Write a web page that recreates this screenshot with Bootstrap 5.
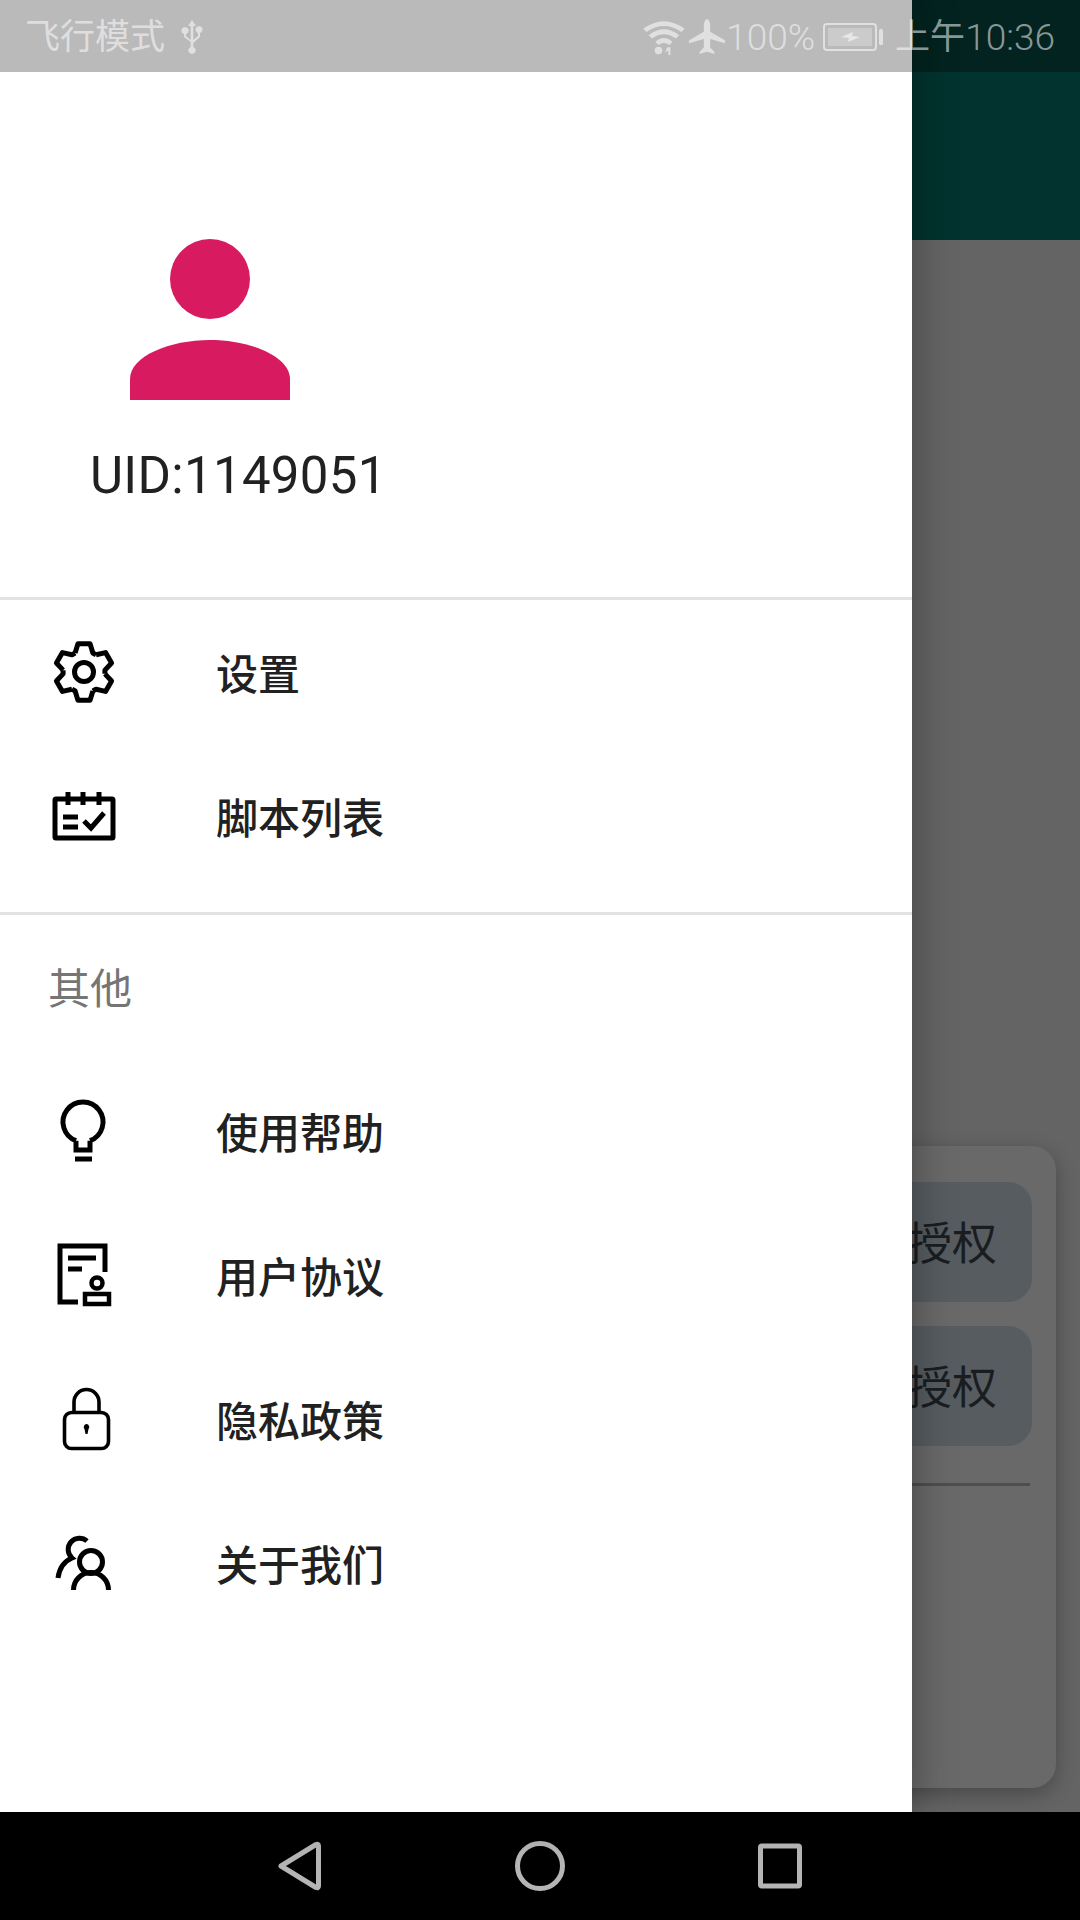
<!DOCTYPE html>
<html lang="zh-CN">

<head>
    <meta charset="UTF-8" />
    <meta name="viewport" content="width=device-width, initial-scale=1" />
    <title>Drawer</title>
    <link href="https://cdn.jsdelivr.net/npm/bootstrap@5.3.2/dist/css/bootstrap.min.css" rel="stylesheet" />
    <style>
        html,
        body {
            margin: 0;
            width: 1080px;
            height: 1920px;
            overflow: hidden;
            font-family: Roboto, "Noto Sans CJK SC", sans-serif;
        }

        .screen {
            width: 1080px;
            height: 1920px;
            background: #646464;
        }

        /* app behind the drawer */
        .app-status {
            height: 72px;
            background: #02231f;
        }

        .app-toolbar {
            height: 168px;
            background: #02332e;
        }

        .app-body {
            padding: 906px 24px 24px;
        }

        .auth-card {
            height: 642px;
            background: #696969;
            border: 0;
            border-radius: 24px;
            box-shadow: 0 6px 20px rgba(0, 0, 0, .28);
            padding: 36px 24px 0;
        }

        .auth-btn {
            height: 120px;
            background: #565c60;
            border: 0;
            border-radius: 24px;
            color: #1a1d20;
            font-size: 45px;
            line-height: 1;
            padding: 4px 35px 0 0;
        }

        .auth-line {
            height: 3px;
            background: #4e4e4e;
            margin: 37px 2px 0 0;
        }

        .bottom-nav {
            height: 108px;
            background: #000;
            gap: 180px;
        }

        /* drawer */
        .side-drawer {
            top: 0;
            left: 0;
            width: 912px;
            bottom: 108px;
            background: #fff;
            box-shadow: 0 0 40px rgba(0, 0, 0, .35);
        }

        .drawer-strip {
            height: 72px;
            background: #bababa;
        }

        .drawer-head {
            height: 525px;
            padding: 167px 0 0 90px;
        }

        .avatar-svg {
            display: block;
            width: 160px;
            height: 161px;
            margin-left: 40px;
            fill: #d81b60;
        }

        .uid-text {
            font-size: 51px;
            letter-spacing: .3px;
            line-height: 60px;
            color: #212121;
            margin-top: 46px;
        }

        .drawer-line {
            height: 3px;
            background: #e2e2e2;
        }

        .line-gap {
            margin-top: 24px;
        }

        .drawer-item {
            height: 144px;
            padding-left: 48px;
            gap: 96px;
            font-size: 42px;
            font-weight: 500;
            color: #212121;
        }

        .drawer-item span {
            padding-top: 6px;
        }

        .drawer-item svg {
            width: 72px;
            height: 72px;
            flex: none;
            fill: none;
            stroke: #000;
            stroke-width: 5;
        }

        .group-title {
            height: 144px;
            padding: 46px 0 0 48px;
            font-size: 42px;
            line-height: 58px;
            color: #757575;
        }

        /* status bar lies over both */
        .status-row {
            top: 0;
            left: 0;
            width: 1080px;
            height: 72px;
            padding: 2px 25px 0;
            color: rgba(255, 255, 255, .55);
        }

        .status-cn {
            font-size: 35px;
            line-height: 1;
        }

        .status-time {
            margin-left: 12px;
        }

        .status-num {
            font-size: 37px;
            font-weight: 300;
            line-height: 1;
        }

        .status-row svg {
            fill: rgba(255, 255, 255, .55);
            flex: none;
        }
    </style>
</head>

<body>
    <div class="screen position-relative d-flex flex-column">

        <!-- app behind -->
        <div class="flex-grow-1">
            <div class="app-status"></div>
            <div class="app-toolbar"></div>
            <div class="app-body">
                <div class="card auth-card">
                    <div class="d-flex flex-column gap-4">
                        <div class="auth-btn d-flex align-items-center justify-content-end">授权</div>
                        <div class="auth-btn d-flex align-items-center justify-content-end">授权</div>
                    </div>
                    <div class="auth-line"></div>
                </div>
            </div>
        </div>

        <!-- bottom nav -->
        <div class="bottom-nav d-flex justify-content-center align-items-center flex-shrink-0">
            <svg width="60" height="64" viewBox="0 0 60 64" fill="none" stroke="#b5b5b5" stroke-width="5" stroke-linejoin="round">
                <path d="M11 32 L46 10.5 Q48.5 9.5 48.5 12 V52 Q48.5 54.5 46 53.5 Z" />
            </svg>
            <svg width="60" height="64" viewBox="0 0 60 64" fill="none" stroke="#b5b5b5" stroke-width="5">
                <circle cx="30" cy="32" r="22.5" />
            </svg>
            <svg width="60" height="64" viewBox="0 0 60 64" fill="none" stroke="#b5b5b5" stroke-width="5" stroke-linejoin="round">
                <rect x="10.5" y="12" width="39" height="40" rx="1.5" />
            </svg>
        </div>

        <!-- drawer -->
        <div class="side-drawer position-absolute">
            <div class="drawer-strip"></div>
            <div class="drawer-head">
                <svg class="avatar-svg" viewBox="0 0 160 161">
                    <circle cx="80" cy="40" r="40" />
                    <path d="M0 161 V140 C0 117 40 101 80 101 C120 101 160 117 160 140 V161 Z" />
                </svg>
                <div class="uid-text">UID:1149051</div>
            </div>
            <div class="drawer-line"></div>

            <div class="drawer-item d-flex align-items-center">
                <svg viewBox="0 0 72 72" stroke-linejoin="round">
                    <g>
                        <path d="M27.13 16.97 L29.97 7.63 H42.03 L44.87 16.97 L48.05 18.8" />
                        <path d="M27.13 16.97 L29.97 7.63 H42.03 L44.87 16.97 L48.05 18.8" transform="rotate(60 36 36)" />
                        <path d="M27.13 16.97 L29.97 7.63 H42.03 L44.87 16.97 L48.05 18.8" transform="rotate(120 36 36)" />
                        <path d="M27.13 16.97 L29.97 7.63 H42.03 L44.87 16.97 L48.05 18.8" transform="rotate(180 36 36)" />
                        <path d="M27.13 16.97 L29.97 7.63 H42.03 L44.87 16.97 L48.05 18.8" transform="rotate(240 36 36)" />
                        <path d="M27.13 16.97 L29.97 7.63 H42.03 L44.87 16.97 L48.05 18.8" transform="rotate(300 36 36)" />
                    </g>
                    <circle cx="36" cy="36" r="9.5" />
                </svg>
                <span>设置</span>
            </div>
            <div class="drawer-item d-flex align-items-center">
                <svg viewBox="0 0 72 72">
                    <rect x="7" y="19" width="58" height="39" rx="1" />
                    <path d="M20 12 V25 M35 12 V25 M51 12 V25 M15 37 H30 M15 47 H30 M36 41 L43 48 L56 33" />
                </svg>
                <span>脚本列表</span>
            </div>
            <div class="drawer-line line-gap"></div>

            <div class="group-title">其他</div>

            <div class="drawer-item d-flex align-items-center">
                <svg viewBox="0 0 72 72">
                    <path d="M42 45.7 V55 H28 V45.7 M42 45.7 A20 20 0 1 0 28 45.7 M27 64 H44" />
                </svg>
                <span>使用帮助</span>
            </div>
            <div class="drawer-item d-flex align-items-center">
                <svg viewBox="0 0 72 72">
                    <path d="M30 63 H12 V7 H57 V33 M20 19 H48 M20 30 H34" />
                    <circle cx="49" cy="44" r="5.5" stroke-width="4.500" />
                    <rect x="37" y="55" width="24" height="10" stroke-width="4.500" />
                </svg>
                <span>用户协议</span>
            </div>
            <div class="drawer-item d-flex align-items-center">
                <svg viewBox="0 0 72 72">
                    <rect x="16.5" y="29.5" width="44" height="36" rx="7" stroke-width="3.6" />
                    <path d="M26 29 V19 A12.5 12.5 0 0 1 51 19 V29" stroke-width="3.6" />
                    <path d="M38.5 41 a3 3 0 0 1 2 5 l-1 5 h-2 l-1 -5 a3 3 0 0 1 2 -5 z" fill="#000" stroke="none" />
                </svg>
                <span>隐私政策</span>
            </div>
            <div class="drawer-item d-flex align-items-center">
                <svg viewBox="0 0 72 72">
                    <circle cx="43" cy="35" r="11.5" />
                    <path d="M25.500 63 A17.500 17.500 0 0 1 60.500 63" />
                    <path d="M39 14 A10.5 10.5 0 1 0 24 31 Q12 36 10 51" />
                </svg>
                <span>关于我们</span>
            </div>
        </div>

        <!-- status bar -->
        <div class="status-row position-absolute d-flex align-items-center justify-content-between">
            <div class="d-flex align-items-center gap-3">
                <span class="status-cn">飞行模式</span>
                <svg width="22" height="34" viewBox="0 0 22 34">
                    <path d="M11 0 L15 6 H12.3 V20 L17 16 V13 A3.5 3.5 0 1 1 19 13 V17 L12.3 23 V27 A3.6 3.6 0 1 1 9.7 27 V22 L3 17 V14 A3.6 3.6 0 1 1 5 14 V16 L9.7 20 V6 H7 Z" />
                </svg>
            </div>
            <div class="d-flex align-items-center">
                <svg width="46" height="37" viewBox="0 0 42 34">
                    <path d="M1 9 Q20 -5 39 9 L36 12 Q20 1 4 12 Z M6 15 Q20 4 34 15 L31 18 Q20 10 9 18 Z M12 21 Q20 14 28 21 L25 24 Q20 20 15 24 Z" />
                    <circle cx="15" cy="29" r="3.5" />
                    <path d="M23 26 H26 V33 H24 V29 L21 31 Z" />
                </svg>
                <svg width="38" height="36" viewBox="0 0 36 34">
                    <path d="M18 0 Q21 1 21 7 V12 L35 20 V23 L21 19 V27 L25 31 V33 L18 31 L11 33 V31 L15 27 V19 L1 23 V20 L15 12 V7 Q15 1 18 0 Z" />
                </svg>
                <span class="status-num">100%</span>
                <svg width="60" height="30" viewBox="0 0 60 30" class="ms-2">
                    <rect x="1" y="2" width="52" height="26" rx="3" fill="none" stroke="rgba(255,255,255,.55)" stroke-width="2" />
                    <rect x="5" y="6" width="44" height="18" fill="rgba(255,255,255,.25)" />
                    <path d="M18 15 L30 10 L29 14 L37 15 L25 20 L26 16 Z" />
                    <rect x="56" y="7" width="4" height="16" rx="1.5" />
                </svg>
                <span class="status-cn status-time">上午</span><span class="status-num">10:36</span>
            </div>
        </div>
    </div>

    <script src="https://cdn.jsdelivr.net/npm/bootstrap@5.3.2/dist/js/bootstrap.bundle.min.js"></script>
</body>

</html>
